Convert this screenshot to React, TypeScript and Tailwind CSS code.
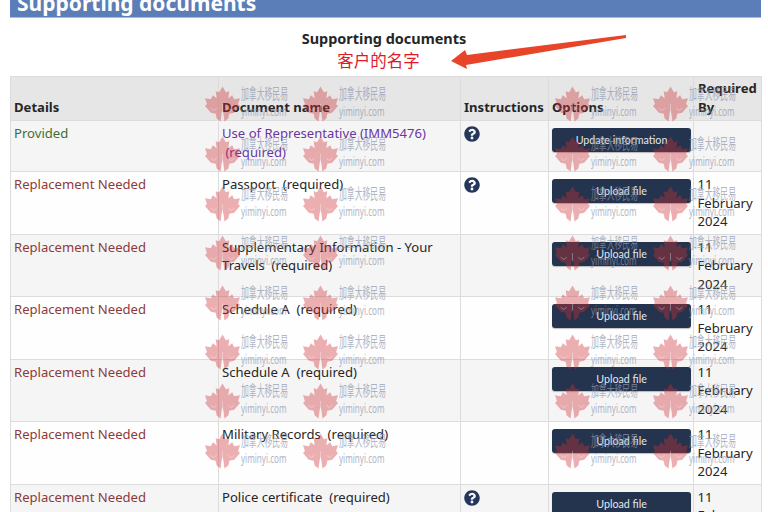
import { FaQuestionCircle } from "react-icons/fa";

const rows = [
  { status: "Provided", name: "Use of Representative (IMM5476)", req: "\u00a0(required)", wrap: true, help: true, btn: "Update information", date: false },
  { status: "Replacement Needed", name: "Passport", req: "\u00a0\u00a0(required)", help: true, btn: "Upload file", date: true },
  { status: "Replacement Needed", name: "Supplementary Information - Your Travels", req: "\u00a0\u00a0(required)", help: false, btn: "Upload file", date: true },
  { status: "Replacement Needed", name: "Schedule A", req: "\u00a0\u00a0(required)", help: false, btn: "Upload file", date: true },
  { status: "Replacement Needed", name: "Schedule A", req: "\u00a0\u00a0(required)", help: false, btn: "Upload file", date: true },
  { status: "Replacement Needed", name: "Military Records", req: "\u00a0\u00a0(required)", help: false, btn: "Upload file", date: true },
  { status: "Replacement Needed", name: "Police certificate", req: "\u00a0\u00a0(required)", help: true, btn: "Upload file", date: true },
];

const marksX = [205, 303, 555, 653];
const marksY = [86, 136, 186, 235, 285, 334, 383, 433];

function Leaf() {
  return (
    <svg width="35" height="36" viewBox="0 0 36 36" className="shrink-0">
      <path
        d="M18 0 L21.5 6 L25 5 L24 12 L28 9 L30 13 L36 12 L34 18 L36 20 L30 27 L25 28 L24 33 L20 36 L19 28 L18 24 L17 28 L16 36 L12 33 L11 28 L6 27 L0 20 L2 18 L0 12 L6 13 L8 9 L12 12 L11 5 L14.5 6Z"
        fill="#cf2f34"
        fillOpacity="0.38"
      />
      <path
        d="M18 18 V26 M6 22 Q9 27 12 22 M24 22 Q27 27 30 22"
        fill="none"
        stroke="#ffffff"
        strokeOpacity="0.4"
        strokeWidth="0.8"
      />
    </svg>
  );
}

function Mark({ x, y }: { x: number; y: number }) {
  return (
    <div className="absolute flex pointer-events-none" style={{ left: x, top: y }}>
      <Leaf />
      <div className="w-[46px] h-[36px] pl-[1px]">
        <div className="flex flex-col gap-[3px] -mt-[1px] whitespace-nowrap text-[#8f97ad] opacity-70">
          <span className="block text-[14.500px] leading-[16px] origin-left scale-x-[0.54] font-['Noto_Sans_CJK_SC',sans-serif]">加拿大移民易</span>
          <span className="block text-[13px] leading-[14px] origin-left scale-x-[0.62] font-['Noto_Sans',sans-serif]">yiminyi.com</span>
        </div>
      </div>
    </div>
  );
}

export default function App() {
  return (
    <div className="relative w-[768px] h-[512px] overflow-hidden bg-white font-['Noto_Sans','Noto_Sans_CJK_SC',sans-serif] text-[13.100px] leading-[18.5px] text-[#262626]">
      <div className="ml-[10px] w-[751px] h-[18px] bg-[#5b7db8] overflow-hidden pl-[7px] border-b border-[#a9bedd]">
        <h1 className="-mt-[11px] text-[21px] leading-[28px] font-bold text-white">Supporting documents</h1>
      </div>
      <div className="h-[58px] pt-[12px] text-center">
        <div className="font-bold text-[14.450px]">Supporting documents</div>
        <div className="pr-[11px] text-[16.500px] leading-[22px] text-[#e0182a] font-['Noto_Sans_CJK_SC',sans-serif]">客户的名字</div>
      </div>
      <div className="px-[10px]">
        <table className="table-fixed border-collapse w-[751px]">
          <colgroup>
            <col className="w-[208px]" />
            <col className="w-[242px]" />
            <col className="w-[88px]" />
            <col className="w-[145px]" />
            <col className="w-[68px]" />
          </colgroup>
          <thead>
            <tr className="bg-[#e6e6e6] h-[44px]">
              {["Details", "Document name", "Instructions", "Options", "Required By"].map((h) => (
                <th key={h} className="border border-[#dcdcdc] px-[3px] pb-[4px] pt-[2px] align-bottom text-left font-bold">
                  <span className={h === "Required By" ? "block pl-[1px]" : "block"}>{h}</span>
                </th>
              ))}
            </tr>
          </thead>
          <tbody>
            {rows.map((r, i) => (
              <tr key={i} className={i % 2 === 0 ? "bg-[#f5f5f5]" : "bg-[#fefefe]"}>
                <td className={`border border-[#dcdcdc] px-[3px] py-[3px] align-top ${r.status === "Provided" ? "text-[#3f6f37]" : "text-[#8e3a3a]"}`}>
                  {r.status}
                </td>
                <td className={`border border-[#dcdcdc] px-[3px] py-[3px] align-top ${r.wrap ? "text-[#6a35a3]" : ""}`}>
                  {r.name}
                  {r.wrap ? <br /> : null}
                  {r.req}
                </td>
                <td className="border border-[#dcdcdc] px-[3px] pt-[5px] pb-[3px] align-top">
                  {r.help ? <FaQuestionCircle className="text-[#24365a] w-[16px] h-[16px]" /> : null}
                </td>
                <td className="border border-[#dcdcdc] px-[3px] pt-[7px] pb-[3px] align-top">
                  <button className="block w-[139px] h-[24px] rounded-[3px] bg-[#24344e] text-[#e3e7ee] text-[10.700px] leading-[24px] text-center font-['Lato',sans-serif] shadow-[0_1px_1px_rgba(0,0,0,0.25)]">
                    {r.btn}
                  </button>
                </td>
                <td className={`border border-[#dcdcdc] px-[3.500px] py-[3px] align-top ${r.date ? "" : "h-[51px]"}`}>
                  {r.date ? "11 February 2024" : null}
                </td>
              </tr>
            ))}
          </tbody>
        </table>
      </div>
      {marksY.map((y) => marksX.map((x) => <Mark key={`${x}-${y}`} x={x} y={y} />))}
      <svg className="absolute left-[445px] top-[30px] pointer-events-none" width="185" height="42" viewBox="445 30 185 42">
        <path d="M451 61 L465 50 L467 55 L626 35 L626 38 L466 65 L467 69 Z" fill="#e8442a" />
      </svg>
    </div>
  );
}
